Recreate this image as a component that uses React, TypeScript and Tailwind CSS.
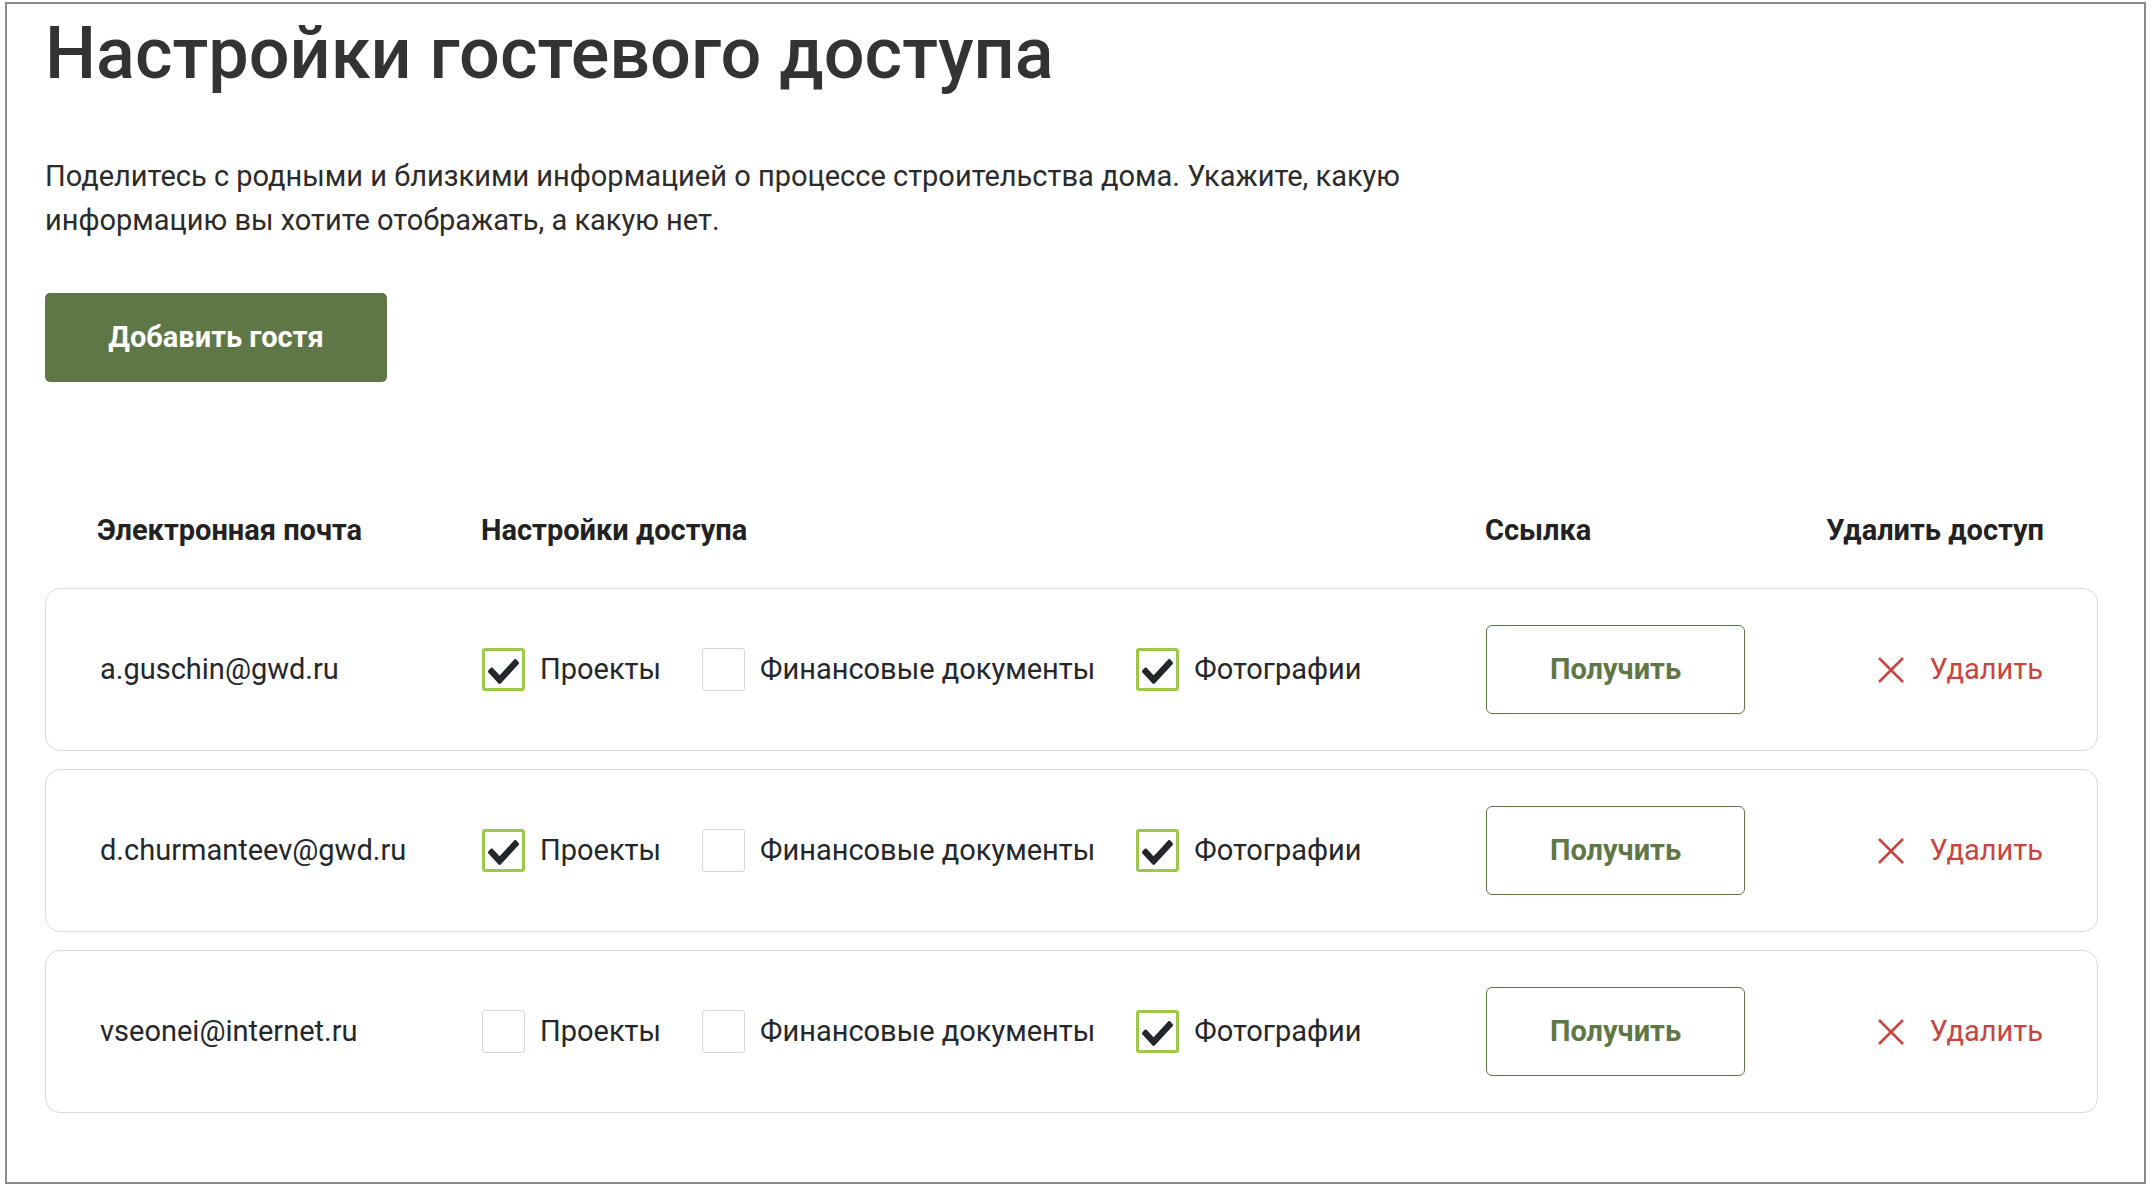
import React from "react";

type Guest = {
  email: string;
  projects: boolean;
  finance: boolean;
  photos: boolean;
};

const guests: Guest[] = [
  { email: "a.guschin@gwd.ru", projects: true, finance: false, photos: true },
  { email: "d.churmanteev@gwd.ru", projects: true, finance: false, photos: true },
  { email: "vseonei@internet.ru", projects: false, finance: false, photos: true },
];

function Check({ checked, label }: { checked: boolean; label: string }) {
  return (
    <label className="flex items-center gap-[15px] cursor-pointer">
      <span
        className={
          checked
            ? "flex h-[43px] w-[43px] items-center justify-center rounded-[3px] border-[3px] border-[#9dc94b] bg-white"
            : "flex h-[43px] w-[43px] items-center justify-center rounded-[3px] border border-[#d6d6d6] bg-white"
        }
      >
        {checked && (
          <svg width="31" height="25" viewBox="0 64 512 384" preserveAspectRatio="none" className="mt-[3px]">
            <path
              fill="#23262b"
              d="M173.898 439.404l-166.4-166.4c-9.997-9.997-9.997-26.206 0-36.204l36.203-36.204c9.997-9.998 26.207-9.998 36.204 0L192 312.69 432.095 72.596c9.997-9.997 26.207-9.997 36.204 0l36.203 36.204c9.997 9.997 9.997 26.206 0 36.204l-294.4 294.401c-9.998 9.997-26.207 9.997-36.204-.001z"
            />
          </svg>
        )}
      </span>
      <span className="text-[29px] text-[#24272b]">{label}</span>
    </label>
  );
}

function GuestRow({ guest }: { guest: Guest }) {
  return (
    <div className="grid h-[163px] grid-cols-[382px_1004px_259px_1fr] items-center rounded-[15px] border border-[#dadada] pl-[54px] pr-[54px]">
      <div className="text-[29px] text-[#24272b]">{guest.email}</div>
      <div className="flex items-center gap-[41px]">
        <Check checked={guest.projects} label="Проекты" />
        <Check checked={guest.finance} label="Финансовые документы" />
        <Check checked={guest.photos} label="Фотографии" />
      </div>
      <button className="h-[89px] w-[259px] rounded-[6px] border border-[#5f7746] text-[29px] font-bold text-[#5f7746]">
        Получить
      </button>
      <button className="flex items-center justify-end gap-[24px] text-[29px] text-[#c94440]">
        <svg width="28" height="26" viewBox="0 0 28 26">
          <path d="M2 1 L26 25 M26 1 L2 25" stroke="#c94440" strokeWidth="2.6" fill="none" />
        </svg>
        Удалить
      </button>
    </div>
  );
}

export default function App() {
  return (
    <div className="min-h-screen bg-white pl-[5px] pt-[2px] font-['Roboto',sans-serif]">
      <div className="h-[1182px] w-[2141px] border-2 border-[#8a8a8a] pl-[38px] pr-[46px] pt-[14px]">
        <h1 className="text-[72px] font-medium leading-none text-[#333333]">
          Настройки гостевого доступа
        </h1>
        <p className="mt-[64px] max-w-[1420px] text-[29px] leading-[44px] text-[#2b2b2b]">
          Поделитесь с родными и близкими информацией о процессе строительства дома. Укажите, какую
          информацию вы хотите отображать, а какую нет.
        </p>
        <button className="mt-[51px] h-[89px] w-[342px] rounded-[5px] bg-[#5f7746] text-[29px] font-bold text-white">
          Добавить гостя
        </button>

        <div className="mt-[127px] grid h-[40px] grid-cols-[382px_1004px_259px_1fr] items-center pl-[54px] pr-[54px] text-[29px] font-bold text-[#222222]">
          <div className="-ml-[2px]">Электронная почта</div>
          <div>Настройки доступа</div>
          <div>Ссылка</div>
          <div className="text-right">Удалить доступ</div>
        </div>

        <div className="mt-[39px] flex flex-col gap-[18px]">
          {guests.map((g) => (
            <GuestRow key={g.email} guest={g} />
          ))}
        </div>
      </div>
    </div>
  );
}
